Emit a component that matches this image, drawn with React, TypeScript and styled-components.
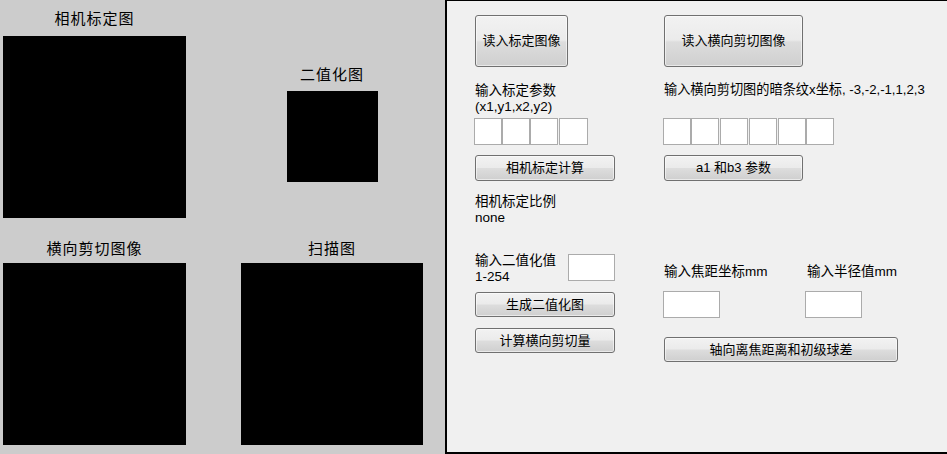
import React from 'react';
import styled, { createGlobalStyle } from 'styled-components';

const Global = createGlobalStyle`
  html, body { margin: 0; padding: 0; background: #cccccc; }
  body { font-family: "Liberation Sans", "Noto Sans CJK SC", sans-serif; color: #000; }
  #root { width: 947px; height: 454px; }
`;

const Window = styled.div`
  display: flex;
  width: 947px;
  height: 454px;
  overflow: hidden;
`;

const Gallery = styled.div`
  width: 445px;
  flex: none;
  box-sizing: border-box;
  background: #cccccc;
  padding-left: 3px;
  display: grid;
  grid-template-columns: 183px 182px;
  grid-template-rows: 218px auto;
  column-gap: 55px;
  align-items: start;
`;

const Figure = styled.div<{ $top: number; $gap: number }>`
  display: flex;
  flex-direction: column;
  align-items: center;
  padding-top: ${p => p.$top}px;
  gap: ${p => p.$gap}px;
`;

const Caption = styled.div`
  font-family: "Noto Sans CJK SC", sans-serif;
  font-size: 15px;
  line-height: 18px;
  letter-spacing: 1px;
  height: 18px;
  white-space: nowrap;
`;

const Screen = styled.div<{ $w: number; $h: number }>`
  width: ${p => p.$w}px;
  height: ${p => p.$h}px;
  background: #000;
`;

const Panel = styled.div`
  flex: 1;
  box-sizing: border-box;
  height: 454px;
  background: #f0f0f0;
  border-left: 2px solid #000;
  border-top: 1px solid #000;
  border-bottom: 2px solid #000;
  padding: 14px 0 0 28px;
  display: flex;
`;

const Column = styled.div<{ $w?: number }>`
  display: flex;
  flex-direction: column;
  align-items: flex-start;
  ${p => (p.$w ? `width: ${p.$w}px; flex: none;` : 'flex: 1;')}
`;

const Label = styled.div<{ $mt?: number; $w?: number; $size?: number }>`
  margin-top: ${p => p.$mt ?? 0}px;
  ${p => (p.$w ? `width: ${p.$w}px; flex: none;` : '')}
  font-size: ${p => p.$size ?? 13.5}px;
  line-height: 16px;
  white-space: nowrap;
`;

const Button = styled.button<{ $w: number; $h: number; $mt?: number }>`
  width: ${p => p.$w}px;
  height: ${p => p.$h}px;
  margin: ${p => p.$mt ?? 0}px 0 0 0;
  box-sizing: border-box;
  padding: 0;
  border: 1px solid #707070;
  border-radius: 3px;
  background: linear-gradient(to bottom, #f2f2f2 0%, #ebebeb 48%, #dddddd 52%, #cfcfcf 100%);
  box-shadow: inset 0 0 0 1px rgba(255, 255, 255, 0.55);
  font-family: "Liberation Sans", "Noto Sans CJK SC", sans-serif;
  font-size: 13px;
  line-height: 16px;
  color: #000;
  cursor: default;
`;

const InputRow = styled.div<{ $mt?: number }>`
  display: flex;
  margin: ${p => p.$mt ?? 0}px 0 0 -1px;
`;

const Field = styled.input<{ $w: number; $mt?: number; $ml?: number }>`
  width: ${p => p.$w}px;
  height: 27px;
  margin: ${p => p.$mt ?? 0}px 0 0 ${p => p.$ml ?? 0}px;
  box-sizing: border-box;
  padding: 0 2px;
  background: #fff;
  border: 1px solid #ababab;
  border-radius: 0;
  outline: none;
  font-size: 13px;
`;

const FieldRow = styled.div<{ $mt?: number }>`
  display: flex;
  align-items: flex-start;
  margin-top: ${p => p.$mt ?? 0}px;
`;

const FieldGroup = styled.div<{ $w?: number }>`
  display: flex;
  flex-direction: column;
  align-items: flex-start;
  ${p => (p.$w ? `width: ${p.$w}px; flex: none;` : '')}
`;

export default function App() {
  return (
    <Window>
      <Global />
      <Gallery>
        <Figure $top={9} $gap={9}>
          <Caption>相机标定图</Caption>
          <Screen $w={183} $h={182} />
        </Figure>
        <Figure $top={65} $gap={8}>
          <Caption>二值化图</Caption>
          <Screen $w={91} $h={91} />
        </Figure>
        <Figure $top={21} $gap={6}>
          <Caption>横向剪切图像</Caption>
          <Screen $w={183} $h={182} />
        </Figure>
        <Figure $top={21} $gap={6}>
          <Caption>扫描图</Caption>
          <Screen $w={182} $h={182} />
        </Figure>
      </Gallery>
      <Panel>
        <Column $w={189}>
          <Button $w={93} $h={52}>读入标定图像</Button>
          <Label $mt={16}>
            输入标定参数
            <br />
            (x1,y1,x2,y2)
          </Label>
          <InputRow $mt={3}>
            <Field $w={28} />
            <Field $w={28} />
            <Field $w={28} />
            <Field $w={29} $ml={1} />
          </InputRow>
          <Button $w={140} $h={26} $mt={10}>相机标定计算</Button>
          <Label $mt={13}>
            相机标定比例
            <br />
            none
          </Label>
          <FieldRow $mt={27}>
            <Label $w={93}>
              输入二值化值
              <br />
              1-254
            </Label>
            <Field $w={47} $mt={1} />
          </FieldRow>
          <Button $w={140} $h={25} $mt={7}>生成二值化图</Button>
          <Button $w={140} $h={25} $mt={11}>计算横向剪切量</Button>
        </Column>
        <Column>
          <Button $w={139} $h={52}>读入横向剪切图像</Button>
          <Label $mt={15} $size={13.2}>输入横向剪切图的暗条纹x坐标, -3,-2,-1,1,2,3</Label>
          <InputRow $mt={20}>
            <Field $w={28} />
            <Field $w={28} />
            <Field $w={28} $ml={1} />
            <Field $w={28} $ml={1} />
            <Field $w={28} $ml={1} />
            <Field $w={28} />
          </InputRow>
          <Button $w={139} $h={26} $mt={10}>a1 和b3 参数</Button>
          <FieldRow $mt={83}>
            <FieldGroup $w={143}>
              <Label>输入焦距坐标mm</Label>
              <Field $w={57} $mt={11} $ml={-1} />
            </FieldGroup>
            <FieldGroup>
              <Label>输入半径值mm</Label>
              <Field $w={57} $mt={11} $ml={-2} />
            </FieldGroup>
          </FieldRow>
          <Button $w={234} $h={25} $mt={19}>轴向离焦距离和初级球差</Button>
        </Column>
      </Panel>
    </Window>
  );
}
